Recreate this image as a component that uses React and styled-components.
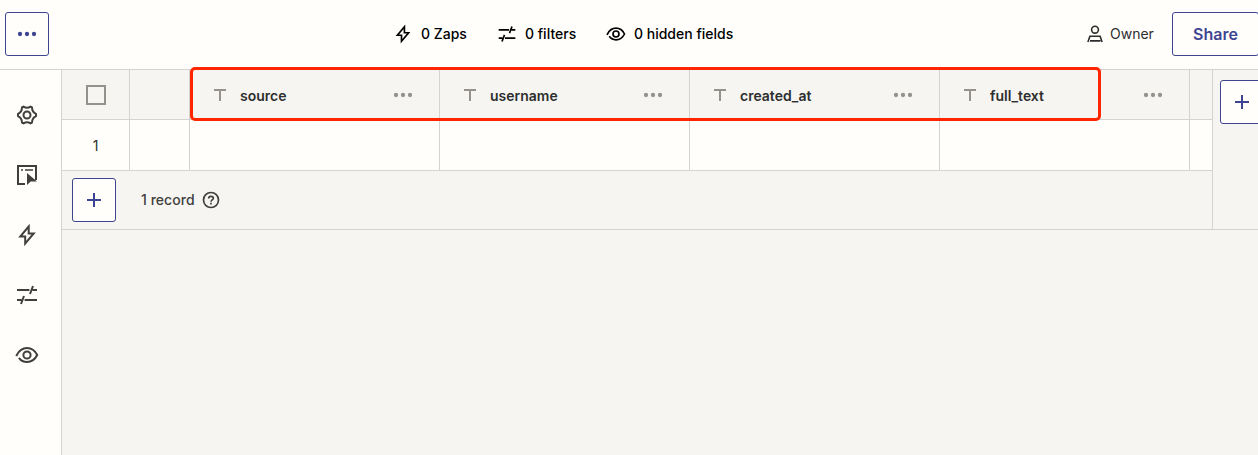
import React from "react";
import styled, { createGlobalStyle } from "styled-components";

const line = "#d4d3cf";
const paper = "#fffefb";
const shade = "#f6f5f2";
const indigo = "#3d4592";

const GlobalStyle = createGlobalStyle`
  *, *::before, *::after { box-sizing: border-box; }
  body { margin: 0; background: ${shade}; overflow: hidden; }
  button { font: inherit; }
  svg { display: block; flex: none; }
`;

const Page = styled.div`
  height: 100vh;
  display: flex;
  flex-direction: column;
  overflow: hidden;
  font-family: Inter, "Liberation Sans", sans-serif;
  color: #2d2e2e;
`;

const TopBar = styled.header`
  flex: none;
  height: 70px;
  display: flex;
  padding: 12px 0 0 5px;
  background: ${paper};
  border-bottom: 1px solid ${line};
  overflow: hidden;
`;

const OutlineButton = styled.button`
  flex: none;
  width: ${(p) => p.$width || 44}px;
  height: 44px;
  padding: 0;
  display: flex;
  align-items: center;
  justify-content: center;
  border: 1px solid ${indigo};
  border-radius: 3px;
  background: ${paper};
  color: ${indigo};
  font-size: 16px;
  font-weight: 600;
`;

const Stats = styled.nav`
  display: flex;
  height: 44px;
  align-items: center;
  margin-left: 344px;
  color: #000;
`;

const Stat = styled.div`
  display: flex;
  align-items: center;
  gap: 8px;
  width: ${(p) => p.$width}px;
  font-size: 14px;
  font-weight: 500;
  white-space: nowrap;
`;

const Label = styled.span`
  margin-bottom: 2px;
`;

const Access = styled.div`
  display: flex;
  height: 44px;
  align-items: center;
  margin-left: auto;
  margin-right: -1px;
`;

const Owner = styled.div`
  display: flex;
  align-items: center;
  gap: 6px;
  width: 86px;
  font-size: 14px;
  white-space: nowrap;
`;

const Body = styled.div`
  flex: 1;
  display: flex;
  min-height: 0;
`;

const Sidebar = styled.aside`
  flex: none;
  width: 62px;
  padding: 33px 0 0 15px;
  display: flex;
  flex-direction: column;
  gap: 36px;
  background: ${paper};
  border-right: 1px solid ${line};
  color: #403f3e;
`;

const Workspace = styled.main`
  position: relative;
  flex: 1;
  min-width: 0;
`;

const Sheet = styled.div`
  display: flex;
  height: 160px;
  border-bottom: 1px solid ${line};
`;

const Table = styled.div`
  flex: none;
  width: 1151px;
  border-right: 1px solid ${line};
`;

const Row = styled.div`
  display: flex;
  height: ${(p) => p.$height}px;
  background: ${(p) => (p.$head ? shade : paper)};
  border-bottom: 1px solid ${line};
`;

const Cell = styled.div`
  flex: none;
  width: ${(p) => p.$width}px;
  display: flex;
  align-items: center;
  justify-content: center;
  border-right: 1px solid ${line};
  font-size: 14px;
  padding-top: 1px;
`;

const FieldCell = styled(Cell)`
  justify-content: flex-start;
  padding: 1px 26px 0 23px;
  color: #95928e;
`;

const FieldName = styled.span`
  margin: 0 auto 0 13px;
  color: #2d2e2e;
  font-weight: 600;
`;

const Checkbox = styled.span`
  width: 20px;
  height: 20px;
  border: 2px solid #95928e;
`;

const Footer = styled.div`
  display: flex;
  padding: 7px 0 0 10px;
  align-items: center;
  color: #403f3e;
`;

const Records = styled.span`
  width: 54px;
  margin: 0 6px 1px 25px;
  font-size: 14px;
  font-weight: 450;
  letter-spacing: 0.05px;
  white-space: nowrap;
`;

const AddField = styled.div`
  padding: 10px 0 0 7px;
  overflow: hidden;
`;

const Highlight = styled.div`
  position: absolute;
  left: 128px;
  top: -3px;
  width: 911px;
  height: 54px;
  border: 3px solid #ff2600;
  border-radius: 5px;
`;

const Dots = () => (
  <svg width="20" height="6" viewBox="0 0 20 6" fill="currentColor">
    <circle cx="3" cy="3" r="2.15" />
    <circle cx="10" cy="3" r="2.15" />
    <circle cx="17" cy="3" r="2.15" />
  </svg>
);

const Icon = ({ size = 24, children }) => (
  <svg width={size} height={size} viewBox="0 0 24 24" fill="none" stroke="currentColor" strokeWidth="2">
    {children}
  </svg>
);

const Plus = () => (
  <svg width="14" height="14" viewBox="0 0 14 14" fill="none" stroke="currentColor" strokeWidth="2">
    <path d="M7 0V14M0 7H14" />
  </svg>
);

const Bolt = (p) => (
  <Icon {...p}>
    <path d="M13.700 3.400 5.300 13.500h4.900v7.100l8.500-10.100h-5Z" />
  </Icon>
);

const Filters = (p) => (
  <Icon {...p}>
    <path d="M2 7h12.400M17.500 7H22M2 17h4.500M9.600 17H22M18 3l-3 8M9 13l-3 8" />
  </Icon>
);

const Eye = (p) => (
  <Icon {...p}>
    <path d="M3.900 14.800C5.900 17.500 8.700 19 12 19c4.300 0 8-2.600 10.200-7C20 7.600 16.300 5 12 5S4 7.600 1.700 12.200l-.3.900" />
    <circle cx="12" cy="12" r="3.600" />
  </Icon>
);

const Gear = () => (
  <Icon>
    <path d="M8.500 3.600Q12 5.800 15.500 3.600L17 4.400Q17 8.900 21 10.900V13.100Q17 15.100 17 19.600L15.500 20.400Q12 18.200 8.500 20.400L7 19.600Q7 15.100 3 13.100V10.900Q7 8.900 7 4.400Z" strokeLinejoin="round" />
    <circle cx="12" cy="12" r="3.500" />
  </Icon>
);

const PageCursor = () => (
  <Icon>
    <path d="M10 21H3V3h18v14" />
    <path d="M6 7h2M10 7h8" strokeWidth="1.600" />
    <path d="M12 10v12l3.700-3.600H22Z" fill="currentColor" stroke="none" />
  </Icon>
);

const Person = () => (
  <svg width="18" height="18" viewBox="0 0 18 18" fill="none" stroke="currentColor" strokeWidth="1.600">
    <circle cx="9" cy="4.700" r="3.400" />
    <path d="M1.900 16.900 3.900 11.200h10.200l2 5.700M4 15.900h10.500" />
  </svg>
);

const Help = () => (
  <Icon size={20}>
    <circle cx="12" cy="12" r="9" />
    <path d="M9.200 10.300c0-1.700 1.200-2.700 2.800-2.700s2.800.9 2.800 2.300c0 1.900-2.800 2-2.800 4.100M12 15.300v2" />
  </Icon>
);

const TextType = () => (
  <svg width="14" height="14" viewBox="0 0 14 14" fill="none" stroke="currentColor" strokeWidth="2">
    <path d="M1 2h12M7 2v11" />
  </svg>
);

const fields = ["source", "username", "created_at", "full_text"];

export default function App() {
  return (
    <Page>
      <GlobalStyle />
      <TopBar>
        <OutlineButton aria-label="More"><Dots /></OutlineButton>
        <Stats>
          <Stat $width={104}><Bolt size={20} /><Label>0 Zaps</Label></Stat>
          <Stat $width={109}><Filters size={20} /><Label>0 filters</Label></Stat>
          <Stat $width={130}><Eye size={20} /><Label>0 hidden fields</Label></Stat>
        </Stats>
        <Access>
          <Owner><Person /><Label>Owner</Label></Owner>
          <OutlineButton $width={87}>Share</OutlineButton>
        </Access>
      </TopBar>
      <Body>
        <Sidebar>
          <Gear />
          <PageCursor />
          <Bolt />
          <Filters />
          <Eye />
        </Sidebar>
        <Workspace>
          <Sheet>
            <Table>
              <Row $height={50} $head>
                <Cell $width={68}><Checkbox /></Cell>
                <Cell $width={60} />
                {fields.map((name) => (
                  <FieldCell key={name} $width={250}>
                    <TextType />
                    <FieldName>{name}</FieldName>
                    <Dots />
                  </FieldCell>
                ))}
              </Row>
              <Row $height={51}>
                <Cell $width={68}>1</Cell>
                <Cell $width={60} />
                {fields.map((name) => <Cell key={name} $width={250} />)}
              </Row>
              <Footer>
                <OutlineButton aria-label="Add record"><Plus /></OutlineButton>
                <Records>1 record</Records>
                <Help />
              </Footer>
            </Table>
            <AddField>
              <OutlineButton aria-label="Add field"><Plus /></OutlineButton>
            </AddField>
          </Sheet>
          <Highlight />
        </Workspace>
      </Body>
    </Page>
  );
}
